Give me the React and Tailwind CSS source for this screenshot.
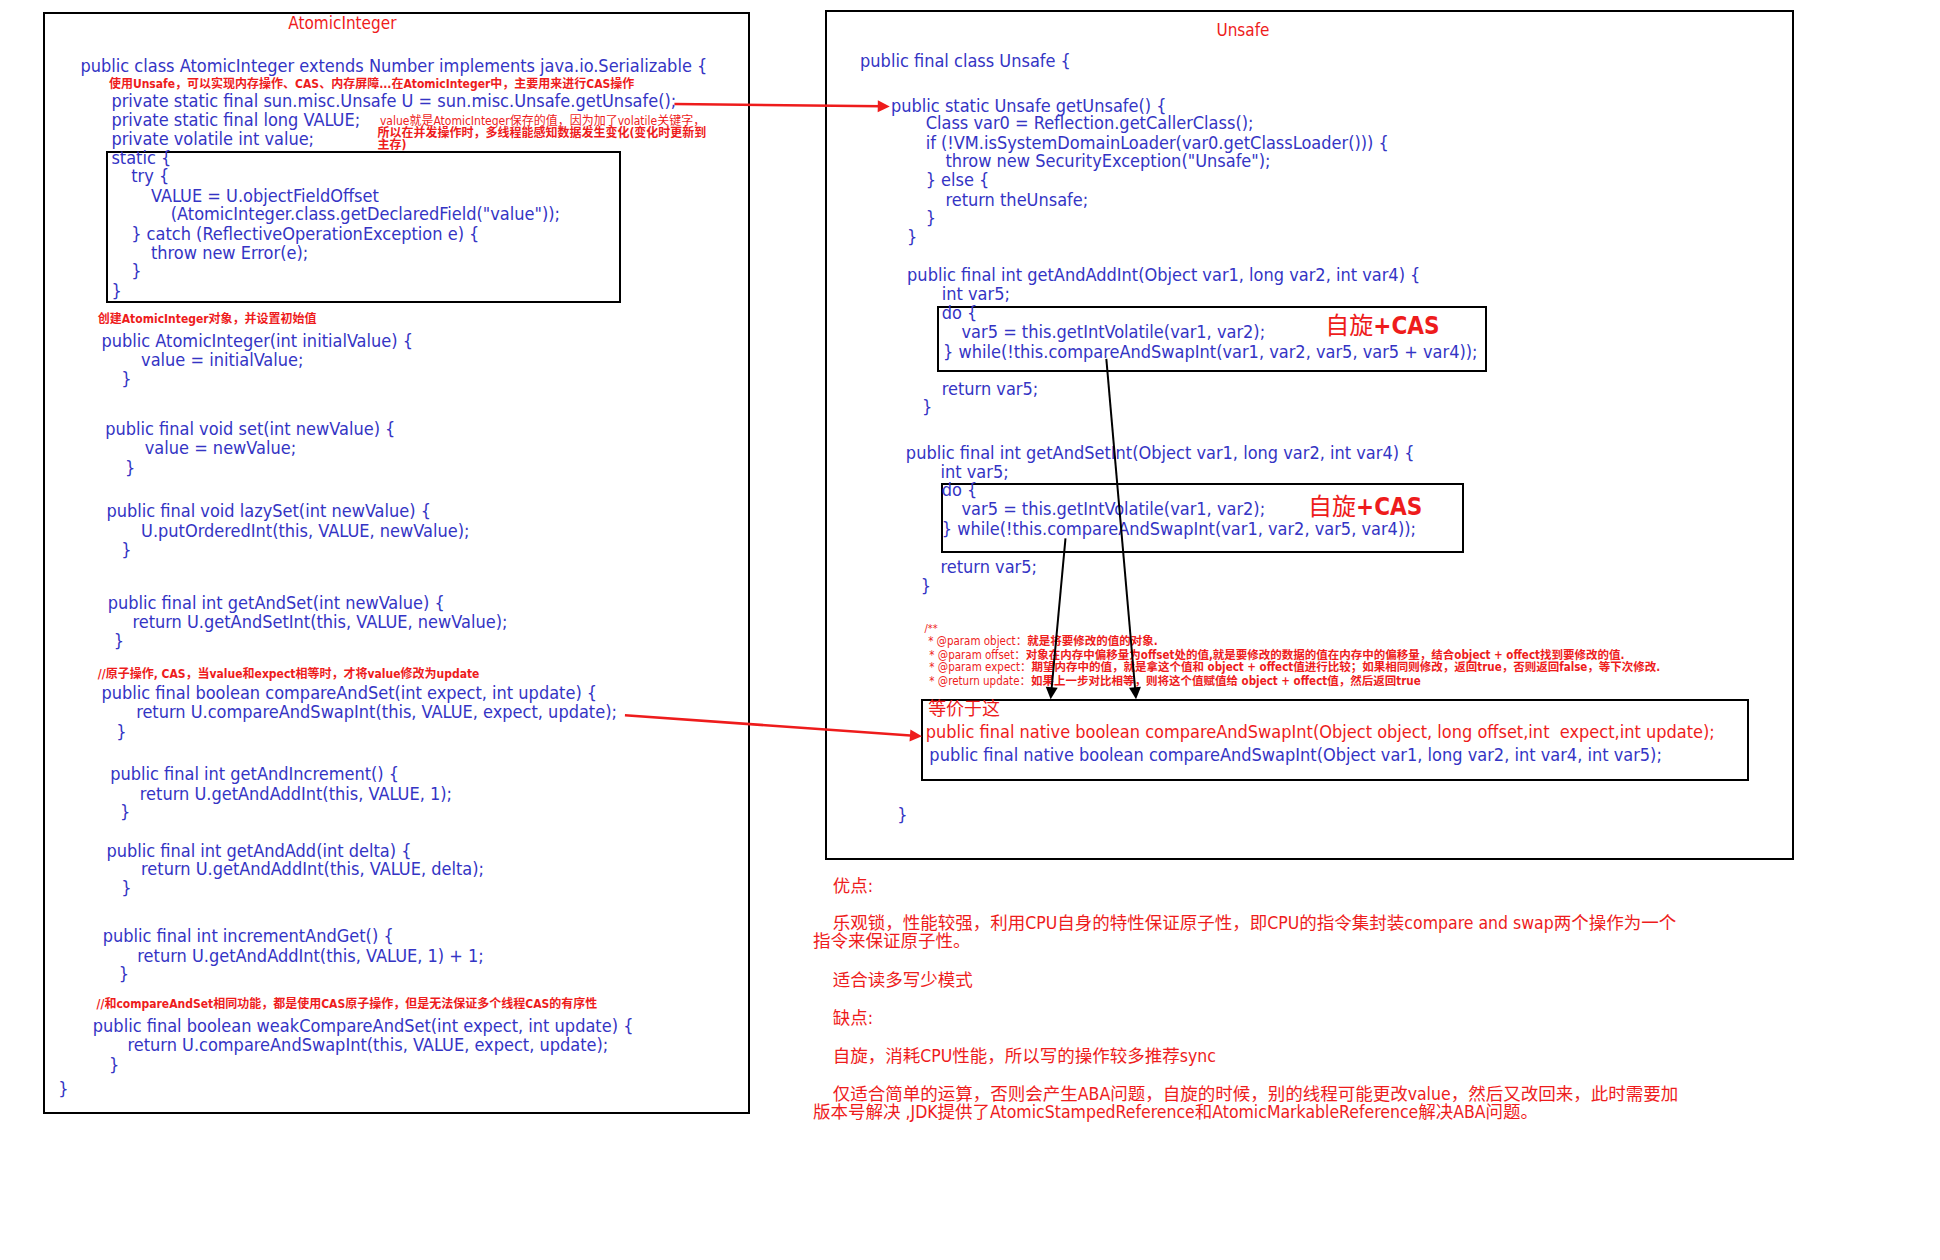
const K = 1.2375;
const B = "text-[#3434c4]";
const R = "text-[#ee1c1c]";

function L({ x, y, s = 18, red, bold, children }) {
  return (
    <div
      className={`absolute whitespace-pre leading-none ${red ? R : B} ${bold ? "font-bold" : ""}`}
      style={{ left: x * K, top: y * K - s * 0.55, fontSize: s }}
    >
      {children}
    </div>
  );
}

function Box({ x1, y1, x2, y2, w = 2 }) {
  return (
    <div
      className="absolute border-black"
      style={{ left: x1 * K, top: y1 * K, width: (x2 - x1) * K, height: (y2 - y1) * K, borderWidth: w }}
    />
  );
}

const left = [
  [65, 54, "public class AtomicInteger extends Number implements java.io.Serializable {"],
  [90, 82, "private static final sun.misc.Unsafe U = sun.misc.Unsafe.getUnsafe();"],
  [90, 98, "private static final long VALUE;"],
  [90, 113, "private volatile int value;"],
  [90, 128, "static {"],
  [106, 143, "try {"],
  [122, 159, "VALUE = U.objectFieldOffset"],
  [138, 174, "(AtomicInteger.class.getDeclaredField(\"value\"));"],
  [106, 190, "} catch (ReflectiveOperationException e) {"],
  [122, 205, "throw new Error(e);"],
  [106, 220, "}"],
  [90, 236, "}"],
  [82, 276, "public AtomicInteger(int initialValue) {"],
  [114, 292, "value = initialValue;"],
  [98, 307, "}"],
  [85, 347, "public final void set(int newValue) {"],
  [117, 363, "value = newValue;"],
  [101, 379, "}"],
  [86, 414, "public final void lazySet(int newValue) {"],
  [114, 430, "U.putOrderedInt(this, VALUE, newValue);"],
  [98, 445, "}"],
  [87, 488, "public final int getAndSet(int newValue) {"],
  [107, 503, "return U.getAndSetInt(this, VALUE, newValue);"],
  [92, 519, "}"],
  [82, 561, "public final boolean compareAndSet(int expect, int update) {"],
  [110, 576, "return U.compareAndSwapInt(this, VALUE, expect, update);"],
  [94, 592, "}"],
  [89, 626, "public final int getAndIncrement() {"],
  [113, 642, "return U.getAndAddInt(this, VALUE, 1);"],
  [97, 657, "}"],
  [86, 688, "public final int getAndAdd(int delta) {"],
  [114, 703, "return U.getAndAddInt(this, VALUE, delta);"],
  [98, 718, "}"],
  [83, 757, "public final int incrementAndGet() {"],
  [111, 773, "return U.getAndAddInt(this, VALUE, 1) + 1;"],
  [96, 788, "}"],
  [75, 830, "public final boolean weakCompareAndSet(int expect, int update) {"],
  [103, 845, "return U.compareAndSwapInt(this, VALUE, expect, update);"],
  [88, 861, "}"],
  [47, 881, "}"],
];

const right = [
  [695, 50, "public final class Unsafe {"],
  [720, 86, "public static Unsafe getUnsafe() {"],
  [748, 100, "Class var0 = Reflection.getCallerClass();"],
  [748, 116, "if (!VM.isSystemDomainLoader(var0.getClassLoader())) {"],
  [764, 131, "throw new SecurityException(\"Unsafe\");"],
  [748, 146, "} else {"],
  [764, 162, "return theUnsafe;"],
  [748, 177, "}"],
  [733, 192, "}"],
  [733, 223, "public final int getAndAddInt(Object var1, long var2, int var4) {"],
  [761, 238, "int var5;"],
  [761, 254, "do {"],
  [777, 269, "var5 = this.getIntVolatile(var1, var2);"],
  [762, 285, "} while(!this.compareAndSwapInt(var1, var2, var5, var5 + var4));"],
  [761, 315, "return var5;"],
  [745, 330, "}"],
  [732, 367, "public final int getAndSetInt(Object var1, long var2, int var4) {"],
  [760, 382, "int var5;"],
  [761, 397, "do {"],
  [777, 412, "var5 = this.getIntVolatile(var1, var2);"],
  [761, 428, "} while(!this.compareAndSwapInt(var1, var2, var5, var4));"],
  [760, 459, "return var5;"],
  [744, 474, "}"],
  [751, 611, "public final native boolean compareAndSwapInt(Object var1, long var2, int var4, int var5);"],
  [725, 659, "}"],
];

const notes = [
  [673, 717, "优点:"],
  [673, 747, "乐观锁，性能较强，利用CPU自身的特性保证原子性，即CPU的指令集封装compare and swap两个操作为一个"],
  [657, 762, "指令来保证原子性。"],
  [673, 793, "适合读多写少模式"],
  [673, 824, "缺点:"],
  [673, 855, "自旋，消耗CPU性能，所以写的操作较多推荐sync"],
  [673, 885, "仅适合简单的运算，否则会产生ABA问题，自旋的时候，别的线程可能更改value，然后又改回来，此时需要加"],
  [657, 900, "版本号解决 ,JDK提供了AtomicStampedReference和AtomicMarkableReference解决ABA问题。"],
];

function Arrow({ x1, y1, x2, y2, color, w = 2 }) {
  const ax = x2 * K, ay = y2 * K, bx = x1 * K, by = y1 * K;
  const ang = Math.atan2(ay - by, ax - bx);
  const len = 12, wd = 6;
  const p1 = [ax - len * Math.cos(ang) + wd * Math.sin(ang), ay - len * Math.sin(ang) - wd * Math.cos(ang)];
  const p2 = [ax - len * Math.cos(ang) - wd * Math.sin(ang), ay - len * Math.sin(ang) + wd * Math.cos(ang)];
  return (
    <g>
      <line x1={bx} y1={by} x2={ax - 8 * Math.cos(ang)} y2={ay - 8 * Math.sin(ang)} stroke={color} strokeWidth={w} />
      <polygon points={`${ax},${ay} ${p1.join(",")} ${p2.join(",")}`} fill={color} />
    </g>
  );
}

export default function App() {
  return (
    <div
      className="relative w-[1940px] h-[1260px] bg-white overflow-hidden"
      style={{ fontFamily: '"DejaVu Sans Condensed", "Noto Sans CJK SC", sans-serif', fontStretch: "condensed" }}
    >
      <Box x1={35} y1={10} x2={606} y2={900} />
      <Box x1={667} y1={8} x2={1450} y2={695} />
      <Box x1={86} y1={122} x2={502} y2={245} />
      <Box x1={757} y1={247} x2={1202} y2={301} />
      <Box x1={760} y1={390} x2={1183} y2={447} />
      <Box x1={744} y1={565} x2={1413} y2={631} />

      <L x={233} y={20} s={17} red>AtomicInteger</L>
      <L x={983} y={25} s={17} red>Unsafe</L>

      {left.map(([x, y, t], i) => <L key={"l" + i} x={x} y={y}>{t}</L>)}
      {right.map(([x, y, t], i) => <L key={"r" + i} x={x} y={y}>{t}</L>)}

      <L x={88} y={68} s={12} red bold>使用Unsafe，可以实现内存操作、CAS、内存屏障...在AtomicInteger中，主要用来进行CAS操作</L>
      <L x={307} y={98} s={12} red>value就是AtomicInteger保存的值，因为加了volatile关键字，</L>
      <L x={305} y={108} s={12} red bold>所以在并发操作时，多线程能感知数据发生变化(变化时更新到</L>
      <L x={305} y={118} s={12} red bold>主存)</L>
      <L x={79} y={258} s={12} red bold>创建AtomicInteger对象，并设置初始值</L>
      <L x={79} y={545} s={12} red bold>//原子操作, CAS，当value和expect相等时，才将value修改为update</L>
      <L x={78} y={812} s={12} red bold>//和compareAndSet相同功能，都是使用CAS原子操作，但是无法保证多个线程CAS的有序性</L>

      <L x={1071} y={264} s={24} red>自旋<span className="font-bold">+CAS</span></L>
      <L x={1057} y={411} s={24} red>自旋<span className="font-bold">+CAS</span></L>

      <L x={747} y={508} s={11} red>/**</L>
      <L x={750} y={519} s={11.5} red>* @param object：<b>就是将要修改的值的对象.</b></L>
      <L x={751} y={530} s={11.5} red>* @param offset：<b>对象在内存中偏移量为offset处的值,就是要修改的数据的值在内存中的偏移量，结合object + offect找到要修改的值.</b></L>
      <L x={751} y={540} s={11.5} red>* @param expect：<b>期望内存中的值，就是拿这个值和 object + offect值进行比较；如果相同则修改，返回true，否则返回false，等下次修改.</b></L>
      <L x={751} y={551} s={11.5} red>* @return update：<b>如果上一步对比相等，则将这个值赋值给 object + offect值，然后返回true</b></L>

      <L x={750} y={574} s={18} red>等价于这</L>
      <L x={748} y={592} red>public final native boolean compareAndSwapInt(Object object, long offset,int  expect,int update);</L>

      {notes.map(([x, y, t], i) => <L key={"n" + i} x={x} y={y} s={17.5} red>{t}</L>)}

      <svg className="absolute left-0 top-0" width="1940" height="1260">
        <Arrow x1={545} y1={84} x2={719} y2={86} color="#ee1c1c" w={2.5} />
        <Arrow x1={505} y1={578} x2={745} y2={595} color="#ee1c1c" w={2.5} />
        <Arrow x1={894} y1={290} x2={918} y2={565} color="#000" w={2} />
        <Arrow x1={861} y1={435} x2={849} y2={565} color="#000" w={2} />
      </svg>
    </div>
  );
}
